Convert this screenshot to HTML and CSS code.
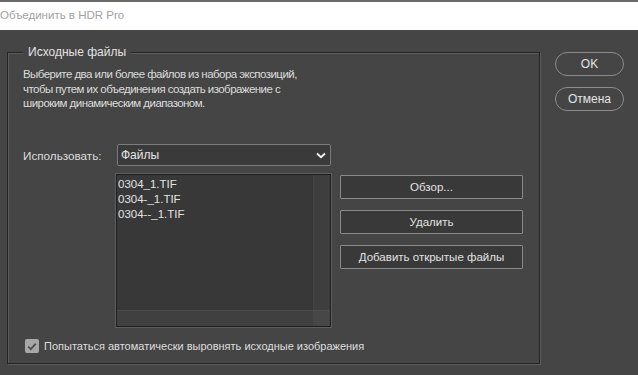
FILE: index.html
```html
<!DOCTYPE html>
<html lang="ru">
<head>
    <meta charset="UTF-8">
    <meta name="viewport" content="width=device-width, initial-scale=1.0">
    <title>Объединить в HDR Pro</title>
    <link rel="stylesheet" href="styles.css">
</head>
<body>
    <div class="titlebar">Объединить в HDR Pro</div>
    <div class="dialog">
        <div class="group">
            <span class="group-title">Исходные файлы</span>
            <p class="desc">Выберите два или более файлов из набора экспозиций,<br>чтобы путем их объединения создать изображение с<br>широким динамическим диапазоном.</p>
            <div class="use-row">
                <span class="use-label">Использовать:</span>
                <div class="select">
                    <span>Файлы</span>
                    <svg width="10" height="7" viewBox="0 0 10 7"><path d="M1 1.5 L5 5.2 L9 1.5" fill="none" stroke="#f2f2f2" stroke-width="1.8"/></svg>
                </div>
            </div>
            <div class="files-row">
                <div class="listbox">
                    <div class="list-main">
                        <ul class="files">
                            <li>0304_1.TIF</li>
                            <li>0304-_1.TIF</li>
                            <li>0304--_1.TIF</li>
                        </ul>
                        <div class="vscroll"></div>
                    </div>
                    <div class="hscroll"><div class="corner"></div></div>
                </div>
                <div class="actions">
                    <button class="btn">Обзор...</button>
                    <button class="btn">Удалить</button>
                    <button class="btn">Добавить открытые файлы</button>
                </div>
            </div>
            <label class="check-row">
                <span class="checkbox">
                    <svg width="10" height="9" viewBox="0 0 10 9"><path d="M1.2 4.6 L3.8 7.2 L8.8 1.6" fill="none" stroke="#505050" stroke-width="1.9"/></svg>
                </span>
                Попытаться автоматически выровнять исходные изображения
            </label>
        </div>
        <div class="side">
            <button class="pill">OK</button>
            <button class="pill">Отмена</button>
        </div>
    </div>
</body>
</html>
```

FILE: styles.css
```css
body {
    margin: 0;
    font-family: "Liberation Sans", Arial, sans-serif;
    font-size: 12px;
    background-color: #454545;
    color: #dcdcdc;
    width: 638px;
    height: 375px;
    overflow: hidden;
}
.titlebar {
    height: 30px;
    box-sizing: border-box;
    border-top: 2px solid #6a6a6a;
    background: #ffffff;
    color: #a2a2a2;
    font-size: 11.5px;
    line-height: 27px;
}
.dialog {
    display: flex;
    align-items: flex-start;
    padding: 22px 0 0 7px;
}
.group {
    position: relative;
    width: 533px;
    height: 312px;
    box-sizing: border-box;
    border: 1px solid #242424;
    box-shadow: 1px 1px 0 #5c5c5c, inset 1px 1px 0 #5c5c5c;
    padding: 14px 0 0 15px;
}
.group-title {
    position: absolute;
    top: -8px;
    left: 15px;
    padding: 0 5px;
    background: #454545;
    line-height: 15px;
    color: #e2e2e2;
}
.desc {
    margin: 0;
    font-size: 11.5px;
    letter-spacing: -0.55px;
    line-height: 14.5px;
    height: 44px;
}
.use-row {
    display: flex;
    align-items: center;
    margin-top: 33px;
}
.use-label {
    width: 94px;
    font-size: 11.7px;
}
.select {
    width: 214px;
    height: 22px;
    box-sizing: border-box;
    border: 1px solid #7c7c7c;
    border-radius: 2px;
    background: #3a3a3a;
    display: flex;
    align-items: center;
    justify-content: space-between;
    padding: 0 4px 0 3px;
    color: #e6e6e6;
}
.files-row {
    display: flex;
    align-items: flex-start;
    margin-top: 8px;
    padding-left: 93px;
}
.listbox {
    width: 215px;
    height: 153px;
    box-sizing: border-box;
    border: 1px solid #1e1e1e;
    box-shadow: 0 0 0 1px #5e5e5e;
    background: #383838;
    display: flex;
    flex-direction: column;
}
.list-main {
    flex: 1;
    display: flex;
}
.files {
    flex: 1;
    list-style: none;
    margin: 0;
    padding: 2px 0 0 1px;
    font-size: 11.5px;
    line-height: 15px;
    color: #e2e2e2;
}
.vscroll {
    width: 16px;
    background: #3e3e3e;
    border-left: 1px solid #444444;
}
.hscroll {
    height: 15px;
    background: #404040;
    border-top: 1px solid #4c4c4c;
    display: flex;
    justify-content: flex-end;
}
.corner {
    width: 17px;
    background: #474747;
}
.actions {
    display: flex;
    flex-direction: column;
    gap: 11px;
    margin-left: 9px;
    margin-top: 1px;
}
.btn {
    width: 183px;
    height: 24px;
    border: 1px solid #8a8a8a;
    border-radius: 1px;
    background: #393939;
    color: #e2e2e2;
    font-family: inherit;
    font-size: 11.5px;
    padding: 0;
}
.check-row {
    display: flex;
    align-items: center;
    gap: 5px;
    margin-top: 12px;
    margin-left: 2px;
    font-size: 11px;
    color: #dedede;
}
.checkbox {
    width: 14px;
    height: 14px;
    border-radius: 2px;
    background: #a8a8a8;
    display: flex;
    align-items: center;
    justify-content: center;
}
.side {
    display: flex;
    flex-direction: column;
    gap: 11px;
    margin-left: 15px;
}
.pill {
    width: 69px;
    height: 24px;
    border: 1px solid #8c8c8c;
    border-radius: 12px;
    background: #454545;
    color: #e4e4e4;
    font-family: inherit;
    font-size: 12px;
    padding: 0;
}
```
